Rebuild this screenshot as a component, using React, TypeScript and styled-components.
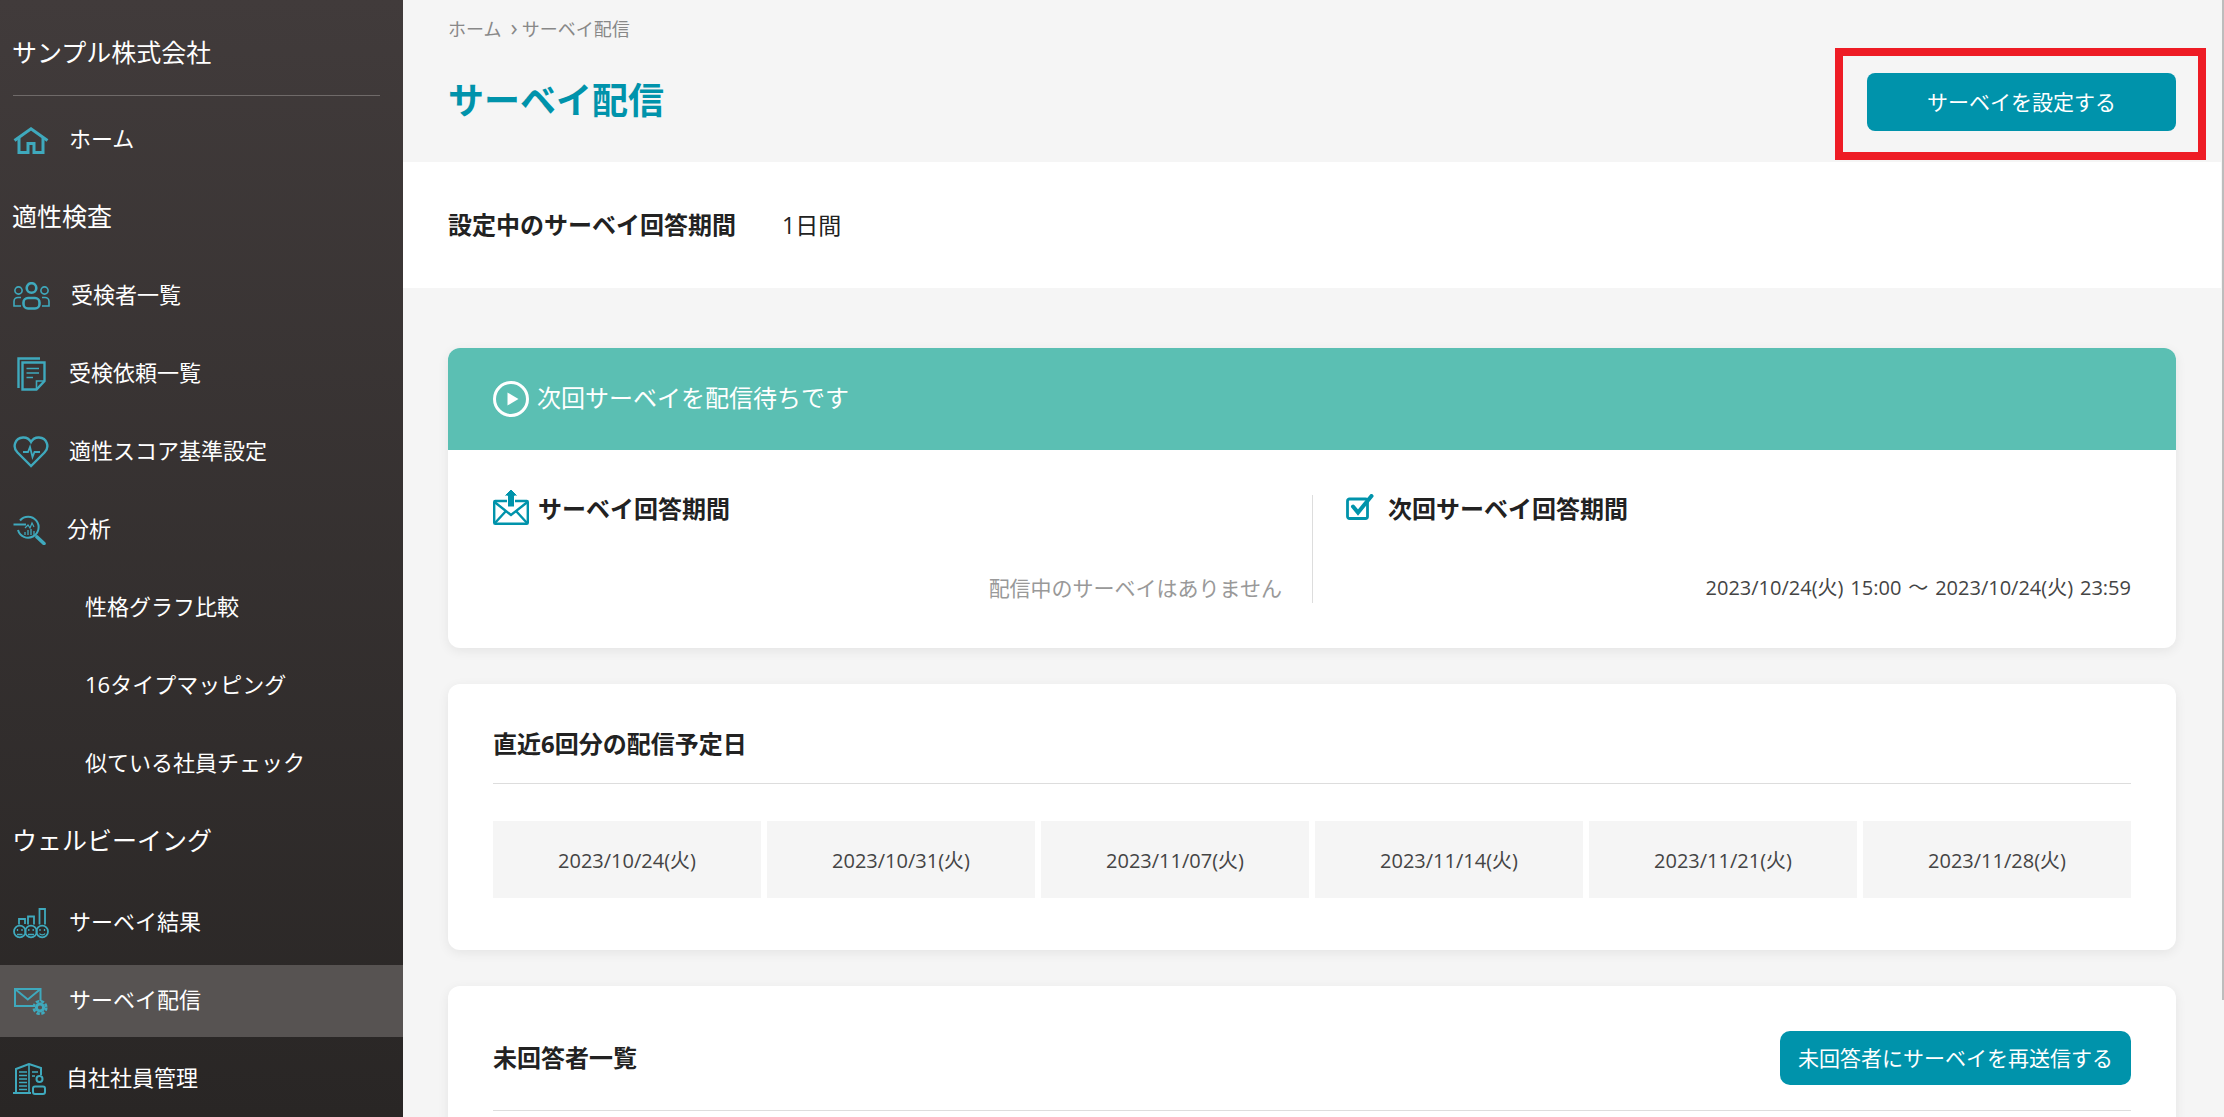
import { FunctionComponent, ReactNode } from 'react';
import styled, { createGlobalStyle } from 'styled-components';

const GlobalStyle = createGlobalStyle`
    html, body {
        margin: 0;
        padding: 0;
        height: 100%;
        overflow: hidden;
    }
    body {
        font-family: "Open Sans", "Noto Sans CJK JP", sans-serif;
        color: #222;
    }
    * {
        box-sizing: border-box;
    }
`;

const Layout = styled.div`
    display: flex;
    height: 100vh;
    background: #f5f5f5;
    overflow: hidden;
`;

const Sidebar = styled.nav`
    flex: 0 0 403px;
    height: 100%;
    background: linear-gradient(180deg, #413b3b 0%, #292625 100%);
    color: #fff;
    overflow: hidden;
`;

const Company = styled.div`
    height: 96px;
    margin: 0 23px 8px 13px;
    padding-top: 34px;
    border-bottom: 1px solid #6f6a69;
    font-size: 25px;
    line-height: 36px;
    text-indent: -1px;
`;

const Menu = styled.div`
    display: flex;
    flex-direction: column;
    gap: 6px;
`;

const Section = styled.div<{ $extra?: number }>`
    display: flex;
    align-items: center;
    height: ${p => 72 + (p.$extra || 0)}px;
    padding: 0 0 ${p => 6 + (p.$extra || 0)}px 12px;
    font-size: 25px;
`;

const Row = styled.div<{ $active?: boolean }>`
    display: flex;
    align-items: center;
    height: 72px;
    padding: 0 0 6px 13px;
    font-size: 22px;
    background: ${p => (p.$active ? '#575352' : 'transparent')};
`;

const SubRow = styled(Row)`
    padding-left: 85px;
`;

const IconSlot = styled.span<{ $width: number }>`
    display: flex;
    flex: 0 0 ${p => p.$width}px;
    margin-top: 6px;
    color: #3fa9bd;
`;

const Main = styled.main`
    flex: 1;
    min-width: 0;
    height: 100%;
    overflow: hidden;
`;

const ScrollTrack = styled.div`
    display: flex;
    justify-content: flex-end;
    flex: 0 0 3px;
`;

const ScrollThumb = styled.div`
    width: 2px;
    height: 1000px;
    background: #bdbdbd;
`;

const Header = styled.header`
    height: 162px;
    padding: 16px 45px 0;
`;

const Breadcrumb = styled.div`
    height: 26px;
    font-size: 18px;
    line-height: 26px;
    color: #888;
`;

const CrumbSeparator = styled.span`
    margin: 0 4px 0 9px;
    font-size: 24px;
    line-height: 0;
`;

const TitleRow = styled.div`
    display: flex;
    justify-content: space-between;
    align-items: center;
    height: 58px;
    margin-top: 31px;
`;

const Title = styled.h1`
    margin: 0 0 3px;
    font-size: 36px;
    line-height: 50px;
    font-weight: 700;
    color: #0093ab;
`;

const Highlighted = styled.div`
    position: relative;
`;

const RedFrame = styled.div`
    position: absolute;
    top: -25px;
    right: -30px;
    bottom: -29px;
    left: -32px;
    border: 8px solid #ee1c25;
    pointer-events: none;
`;

const Button = styled.button<{ $wide?: boolean }>`
    display: block;
    width: ${p => (p.$wide ? 351 : 309)}px;
    height: ${p => (p.$wide ? 54 : 58)}px;
    padding: 0 0 2px;
    border: 0;
    border-radius: ${p => (p.$wide ? 10 : 8)}px;
    background: #0093ab;
    color: #fff;
    font-family: inherit;
    font-size: 21px;
`;

const SettingBar = styled.section`
    display: flex;
    align-items: center;
    gap: 46px;
    height: 126px;
    padding: 0 45px 3px;
    background: #fff;
    font-size: 23px;
`;

const SettingLabel = styled.span`
    font-size: 24px;
    font-weight: 700;
`;

const Content = styled.div`
    display: flex;
    flex-direction: column;
    gap: 36px;
    padding: 60px 45px;
`;

const Card = styled.section`
    border-radius: 12px;
    background: #fff;
    box-shadow: 0 3px 12px rgba(0, 0, 0, 0.07);
    overflow: hidden;
`;

const StatusHeader = styled.div`
    display: flex;
    align-items: center;
    gap: 8px;
    height: 102px;
    padding: 0 45px 5px;
    background: #5bbfb3;
    color: #fff;
    font-size: 24px;
    svg {
        margin-top: 5px;
        flex: none;
    }
`;

const Periods = styled.div`
    display: grid;
    grid-template-columns: 820px 1fr;
    padding: 45px;
`;

const Period = styled.div<{ $first?: boolean }>`
    display: flex;
    flex-direction: column;
    justify-content: space-between;
    height: 108px;
    padding: ${p => (p.$first ? '0 30px 0 0' : '0 0 0 33px')};
    border-right: ${p => (p.$first ? '1px solid #ddd' : '0')};
`;

const PeriodHead = styled.div<{ $gap: number }>`
    display: flex;
    align-items: center;
    gap: ${p => p.$gap}px;
    height: 30px;
    padding-bottom: 5px;
    font-size: 24px;
    font-weight: 700;
    svg {
        margin-bottom: 1px;
        flex: none;
    }
`;

const PeriodValue = styled.div<{ $muted?: boolean }>`
    font-size: ${p => (p.$muted ? 21 : 20)}px;
    line-height: 30px;
    text-align: right;
    word-spacing: 1.7px;
    color: ${p => (p.$muted ? '#999' : '#444')};
`;

const CardBody = styled.div<{ $open?: boolean }>`
    padding: 0 45px ${p => (p.$open ? 200 : 52)}px;
`;

const CardTitleRow = styled.div<{ $height: number; $top: number }>`
    display: flex;
    justify-content: space-between;
    align-items: center;
    height: ${p => p.$height}px;
    padding-top: ${p => p.$top}px;
    border-bottom: 1px solid #ddd;
    font-size: 24px;
    font-weight: 700;
`;

const CardTitle = styled.span<{ $lift: number }>`
    margin-bottom: ${p => p.$lift}px;
`;

const Dates = styled.div`
    display: grid;
    grid-template-columns: repeat(6, 1fr);
    gap: 6px;
    margin-top: 37px;
`;

const DateCell = styled.div`
    display: flex;
    align-items: center;
    justify-content: center;
    height: 77px;
    background: #f5f5f5;
    color: #444;
    font-size: 20px;
`;

const HomeIcon = () => (
    <svg width="36" height="27" viewBox="0 0 36 27" fill="none" stroke="currentColor" strokeWidth="3">
        <path d="M1.5 13.5 18 1.8 34.5 13.5" />
        <path d="M6 11v14.5h9v-9h6v9h9V11" />
    </svg>
);

const UsersIcon = () => (
    <svg width="37" height="28" viewBox="0 0 37 28" fill="none" stroke="currentColor" strokeWidth="1.6">
        <circle cx="18.5" cy="6" r="4.8" strokeWidth="2.6" />
        <rect x="10.5" y="16" width="16" height="10.5" rx="4.5" strokeWidth="2.6" />
        <circle cx="5.5" cy="8.5" r="3.6" />
        <circle cx="31.5" cy="8.5" r="3.6" />
        <path d="M8 15.5H5a4 4 0 0 0-4 4v4.5h7" />
        <path d="M29 15.5h3a4 4 0 0 1 4 4v4.5h-7" />
    </svg>
);

const DocsIcon = () => (
    <svg width="33" height="34" viewBox="0 0 33 34" fill="none" stroke="currentColor" strokeWidth="2.4">
        <path d="M5.5 31V1.5H27" />
        <path d="M9.5 5.5H31.5V24L23.5 32.5H9.5Z" />
        <path d="M31 24H23.5V32" strokeWidth="1.6" />
        <path d="M13.5 11.5H26M13.5 16H26M13.5 20.5H20" strokeWidth="1.5" />
    </svg>
);

const HeartIcon = () => (
    <svg width="36" height="32" viewBox="0 0 36 32" fill="none" stroke="currentColor" strokeWidth="2.4">
        <path d="M18 30 4.5 16.5C-1 11 2 2 10 1.5c4-.2 6.500 1.800 8 4.500 1.500-2.700 4-4.700 8-4.500 8 .5 11 9.500 5.500 15Z" />
        <path d="M10 16h5l2-5 2.500 10 2-5H27" strokeWidth="1.800" />
    </svg>
);

const AnalysisIcon = () => (
    <svg width="33" height="30" viewBox="0 0 33 30" fill="none" stroke="currentColor" strokeWidth="2">
        <path d="M7 5.500A10.500 10.500 0 1 1 5 15" />
        <path d="M0.500 9.500H13" />
        <path d="M24 22l7 6.500" strokeWidth="3.600" strokeLinecap="round" />
        <path d="M12 20v-3M15 20v-5M18 20v-6M21 20v-4" strokeWidth="1.300" />
        <path d="M12 13l3-3 2 3 2-5 2 4" strokeWidth="1.200" />
    </svg>
);

const ResultIcon = () => (
    <svg width="36" height="31" viewBox="0 0 36 31" fill="none" stroke="currentColor" strokeWidth="1.800">
        <circle cx="6.800" cy="23.500" r="5.800" />
        <circle cx="18" cy="23.500" r="5.800" />
        <circle cx="29.200" cy="23.500" r="5.800" />
        <path d="M6 16.500V11h6v5M15 16.500V8.500h6v8M26.500 16.500V1h5.500v15.500" />
        <path d="M4.500 21v2M9 21v2M15.800 21v2M20.200 21v2M27 21v2M31.500 21v2" strokeWidth="1.300" />
        <path d="M4 26.500h5.500M15 26.500h6M26.500 25.500c1 1.800 4.500 1.800 5.500 0" strokeWidth="1.300" />
    </svg>
);

const MailGearIcon = () => (
    <svg width="35" height="27" viewBox="0 0 35 27" fill="none" stroke="currentColor" strokeWidth="2">
        <path d="M27.500 13V1H2V18H20" />
        <path d="M2 1 14.800 11.500 27.500 1" />
        <circle cx="27" cy="19.500" r="3.600" strokeWidth="3" />
        <circle cx="27" cy="19.500" r="6.300" strokeWidth="2.600" strokeDasharray="3.300 1.650" />
    </svg>
);

const BuildingIcon = () => (
    <svg width="33" height="32" viewBox="0 0 33 32" fill="none" stroke="currentColor" strokeWidth="2">
        <path d="M0 30H18" />
        <path d="M3 30V6L16 1 28 5V12" />
        <path d="M16 1V30" strokeWidth="1.600" />
        <path d="M6 9H14M6 12.500H14M6 16H14M6 19.500H14M6 23H14M6 26.500H14" strokeWidth="1.700" />
        <path d="M19 9H25M19 13H22" strokeWidth="1.500" />
        <circle cx="26.500" cy="16" r="3" />
        <rect x="20" y="23.500" width="12" height="7.500" rx="2" strokeWidth="2" />
    </svg>
);

const PlayIcon = () => (
    <svg width="36" height="36" viewBox="0 0 36 36" fill="none">
        <circle cx="18" cy="18" r="16.500" stroke="#fff" strokeWidth="3" />
        <path d="M14.500 11.500 25.500 18 14.500 24.500Z" fill="#fff" />
    </svg>
);

const MailUploadIcon = () => (
    <svg width="36" height="36" viewBox="0 0 36 36" fill="none" stroke="#0093ab" strokeWidth="2.400">
        <rect x="1.200" y="12" width="33.600" height="22.800" rx="1" />
        <path d="M1.500 13 18 26 34.500 13" />
        <path d="M1.500 34.500 13 22M34.500 34.500 23 22" />
        <path d="M18 0 25 7H21.500V18H14.500V7H11Z" fill="#0093ab" stroke="#fff" strokeWidth="1" />
    </svg>
);

const CheckIcon = () => (
    <svg width="28" height="26" viewBox="0 0 28 26" fill="none" stroke="#0093ab">
        <rect x="1.500" y="5" width="20" height="19.500" rx="2" strokeWidth="2.800" />
        <path d="M7 12.500 12 18.500 25.500 2" strokeWidth="4" strokeLinecap="round" />
    </svg>
);

interface INavRow {
    icon: ReactNode;
    labelOffset: number;
    active?: boolean;
    children: ReactNode;
}

const NavRow: FunctionComponent<INavRow> = ({ icon, labelOffset, active, children }) => (
    <Row $active={active}>
        <IconSlot $width={labelOffset}>{icon}</IconSlot>
        {children}
    </Row>
);

const scheduled = [
    '2023/10/24(火)',
    '2023/10/31(火)',
    '2023/11/07(火)',
    '2023/11/14(火)',
    '2023/11/21(火)',
    '2023/11/28(火)',
];

const App = () => (
    <Layout>
        <GlobalStyle />
        <Sidebar>
            <Company>サンプル株式会社</Company>
            <Menu>
                <NavRow icon={<HomeIcon />} labelOffset={56}>ホーム</NavRow>
                <Section>適性検査</Section>
                <NavRow icon={<UsersIcon />} labelOffset={58}>受検者一覧</NavRow>
                <NavRow icon={<DocsIcon />} labelOffset={56}>受検依頼一覧</NavRow>
                <NavRow icon={<HeartIcon />} labelOffset={56}>適性スコア基準設定</NavRow>
                <NavRow icon={<AnalysisIcon />} labelOffset={54}>分析</NavRow>
                <SubRow>性格グラフ比較</SubRow>
                <SubRow>16タイプマッピング</SubRow>
                <SubRow>似ている社員チェック</SubRow>
                <Section $extra={3}>ウェルビーイング</Section>
                <NavRow icon={<ResultIcon />} labelOffset={56}>サーベイ結果</NavRow>
                <NavRow icon={<MailGearIcon />} labelOffset={56} active>サーベイ配信</NavRow>
                <NavRow icon={<BuildingIcon />} labelOffset={53}>自社社員管理</NavRow>
            </Menu>
        </Sidebar>
        <Main>
            <Header>
                <Breadcrumb>
                    ホーム<CrumbSeparator>›</CrumbSeparator>サーベイ配信
                </Breadcrumb>
                <TitleRow>
                    <Title>サーベイ配信</Title>
                    <Highlighted>
                        <Button>サーベイを設定する</Button>
                        <RedFrame />
                    </Highlighted>
                </TitleRow>
            </Header>
            <SettingBar>
                <SettingLabel>設定中のサーベイ回答期間</SettingLabel>
                <span>1日間</span>
            </SettingBar>
            <Content>
                <Card>
                    <StatusHeader>
                        <PlayIcon />
                        次回サーベイを配信待ちです
                    </StatusHeader>
                    <Periods>
                        <Period $first>
                            <PeriodHead $gap={9}>
                                <MailUploadIcon />
                                サーベイ回答期間
                            </PeriodHead>
                            <PeriodValue $muted>配信中のサーベイはありません</PeriodValue>
                        </Period>
                        <Period>
                            <PeriodHead $gap={14}>
                                <CheckIcon />
                                次回サーベイ回答期間
                            </PeriodHead>
                            <PeriodValue>2023/10/24(火) 15:00 〜 2023/10/24(火) 23:59</PeriodValue>
                        </Period>
                    </Periods>
                </Card>
                <Card>
                    <CardBody>
                        <CardTitleRow $height={100} $top={22}>
                            <CardTitle $lift={4}>直近6回分の配信予定日</CardTitle>
                        </CardTitleRow>
                        <Dates>
                            {scheduled.map(d => (
                                <DateCell key={d}>{d}</DateCell>
                            ))}
                        </Dates>
                    </CardBody>
                </Card>
                <Card>
                    <CardBody $open>
                        <CardTitleRow $height={125} $top={19}>
                            <CardTitle $lift={2}>未回答者一覧</CardTitle>
                            <Button $wide>未回答者にサーベイを再送信する</Button>
                        </CardTitleRow>
                    </CardBody>
                </Card>
            </Content>
        </Main>
        <ScrollTrack>
            <ScrollThumb />
        </ScrollTrack>
    </Layout>
);

export default App;
